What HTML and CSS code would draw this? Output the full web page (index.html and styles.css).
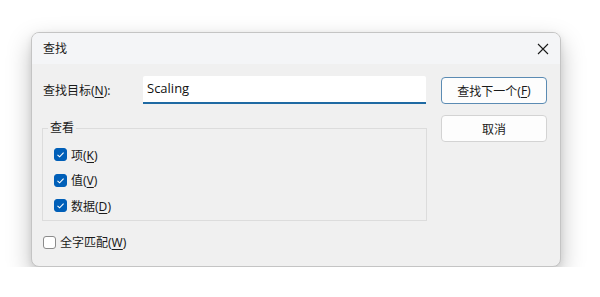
FILE: index.html
```html
<!DOCTYPE html>
<html lang="zh-CN">
<head>
<meta charset="utf-8">
<link rel="stylesheet" href="styles.css">
</head>
<body>
<div class="stage">
  <div class="window">
    <div class="titlebar">
      <span class="title">查找</span>
      <svg class="close" width="12" height="12" viewBox="0 0 12 12"><path d="M1 1 L11 11 M11 1 L1 11" stroke="#1a1a1a" stroke-width="1.1" fill="none"/></svg>
    </div>
    <div class="content">
      <div class="main">
        <div class="find-row">
          <span class="find-label">查找目标(<u>N</u>):</span>
          <div class="input">Scaling</div>
        </div>
        <div class="group">
          <span class="legend">查看</span>
          <div class="check-row"><span class="cb checked"><svg width="13" height="13" viewBox="0 0 13 13"><path d="M3.5 6.8 L5.6 8.8 L9.6 4.6" stroke="#fff" stroke-width="1.1" fill="none"/></svg></span><span>项(<u>K</u>)</span></div>
          <div class="check-row"><span class="cb checked"><svg width="13" height="13" viewBox="0 0 13 13"><path d="M3.5 6.8 L5.6 8.8 L9.6 4.6" stroke="#fff" stroke-width="1.1" fill="none"/></svg></span><span>值(<u>V</u>)</span></div>
          <div class="check-row"><span class="cb checked"><svg width="13" height="13" viewBox="0 0 13 13"><path d="M3.5 6.8 L5.6 8.8 L9.6 4.6" stroke="#fff" stroke-width="1.1" fill="none"/></svg></span><span>数据(<u>D</u>)</span></div>
        </div>
        <div class="check-row whole"><span class="cb"></span><span>全字匹配(<u>W</u>)</span></div>
      </div>
      <div class="buttons">
        <div class="btn primary">查找下一个(<u>F</u>)</div>
        <div class="btn">取消</div>
      </div>
    </div>
  </div>
</div>
</body>
</html>
```
FILE: styles.css
```css
html, body {
  margin: 0;
  padding: 0;
  background: #ffffff;
}
body {
  font-family: "Noto Sans", "Noto Sans CJK SC", sans-serif;
  font-size: 12px;
  color: #1b1b1b;
}
.stage {
  padding: 32px 0 0 31px;
}
.window {
  width: 530px;
  height: 235px;
  box-sizing: border-box;
  border: 1px solid #c4c4c4;
  border-radius: 8px;
  background: #f0f0f0;
  box-shadow: 0 10px 24px rgba(0,0,0,0.26), 0 2px 6px rgba(0,0,0,0.08);
  overflow: hidden;
}
.titlebar {
  height: 31px;
  background: #f4f5f7;
  display: flex;
  align-items: center;
  justify-content: space-between;
  padding: 0 11px 0 11px;
}
.title {
  font-size: 12px;
  line-height: 16px;
}
.close {
  margin-top: 1px;
}
.content {
  display: flex;
  padding: 12px 0 0 11px;
  gap: 14px;
}
.main {
  width: 384px;
}
.find-row {
  display: flex;
  align-items: center;
  height: 28px;
}
.find-label {
  width: 100px;
}
.input {
  width: 283px;
  height: 28px;
  box-sizing: border-box;
  background: #ffffff;
  border-bottom: 2px solid #1f6aa3;
  border-radius: 2px 2px 0 0;
  padding: 3px 0 0 4px;
  font-family: "Open Sans", "Noto Sans", sans-serif;
  font-size: 13px;
  line-height: 18px;
  color: #111;
}
.group {
  position: relative;
  margin-top: 24px;
  margin-left: -1px;
  height: 93px;
  box-sizing: border-box;
  border: 1px solid #dcdcdc;
  padding: 13px 0 0 11px;
}
.legend {
  position: absolute;
  top: -9px;
  left: 5px;
  padding: 0 2px;
  background: #f0f0f0;
  line-height: 16px;
}
.check-row {
  display: flex;
  align-items: center;
  height: 26px;
  gap: 4px;
}
.group .check-row {
  height: 25.5px;
}
.cb {
  width: 13px;
  height: 13px;
  box-sizing: border-box;
  border-radius: 3px;
  border: 1px solid #8b8b8b;
  background: #fff;
  display: flex;
}
.cb.checked {
  background: #005fb8;
  border-color: #005fb8;
}
.cb.checked svg {
  margin: -1px;
}
.whole {
  margin-top: 8px;
}
.buttons {
  display: flex;
  flex-direction: column;
  gap: 11px;
  padding-top: 1px;
}
.btn {
  width: 106px;
  height: 27px;
  box-sizing: border-box;
  border: 1px solid #d3d3d3;
  border-radius: 4px;
  background: #fdfdfd;
  display: flex;
  align-items: center;
  justify-content: center;
}
.btn.primary {
  border-color: #5b8bb3;
}
u {
  text-decoration-thickness: 1px;
  text-underline-offset: 2px;
}
```
